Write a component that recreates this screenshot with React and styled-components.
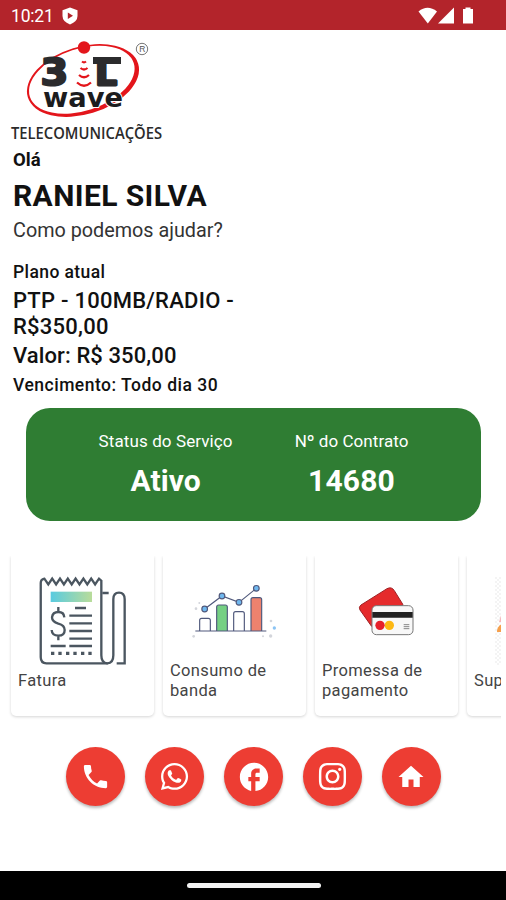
import React from "react";
import styled, { createGlobalStyle } from "styled-components";
import { MdPhone, MdFacebook, MdHome } from "react-icons/md";
import { FaWhatsapp, FaInstagram } from "react-icons/fa";

const GlobalStyle = createGlobalStyle`
  * {
    box-sizing: border-box;
  }

  body {
    margin: 0;
    background-color: #fff;
    font-family: Roboto, "Liberation Sans", sans-serif;
    overflow: hidden;
  }
`;

// Tela inteira do aplicativo
const Screen = styled.div`
  width: 506px;
  height: 900px;
  display: flex;
  flex-direction: column;
  background-color: #fff;
  overflow: hidden;
`;

// Barra de status do Android
const StatusBar = styled.header`
  height: 30px;
  flex-shrink: 0;
  display: flex;
  align-items: center;
  padding: 1px 31px 0 11px;
  background-color: #b3242b;
  color: #fff;
`;

const Clock = styled.span`
  width: 51px;
  font-size: 17.5px;
  letter-spacing: -0.2px;
`;

const StatusIcons = styled.div`
  margin-left: auto;
  display: flex;
`;

const Main = styled.main`
  flex: 1;
  display: flex;
  flex-direction: column;
`;

const LogoBox = styled.div`
  height: 118px;
`;

// Dados do cliente e do plano
const Info = styled.section`
  width: 250px;
  padding-left: 13px;
  color: #111;
`;

const Line = styled.p`
  margin: ${(props) => props.$top || 0}px 0 0;
  font-size: ${(props) => props.$size}px;
  font-weight: ${(props) => props.$weight || 400};
  line-height: ${(props) => props.$height}px;
  letter-spacing: ${(props) => props.$spacing || 0}px;
  color: ${(props) => props.$color || "inherit"};
  white-space: ${(props) => (props.$wrap ? "normal" : "nowrap")};
`;

// Cartão verde com o status do contrato
const ServiceCard = styled.section`
  width: 455px;
  height: 113px;
  margin: 11px 0 0 26px;
  padding-top: 21px;
  display: flex;
  justify-content: center;
  gap: 62px;
  border-radius: 24px;
  background-color: #2f7d33;
  color: #fff;
`;

const ServiceItem = styled.div`
  text-align: center;
`;

// Lista horizontal de atalhos
const Shortcuts = styled.section`
  height: 165px;
  width: 501px;
  margin-top: 35px;
  padding-left: 11px;
  display: flex;
  gap: 9px;
  overflow: hidden;
`;

const Shortcut = styled.article`
  width: 143px;
  height: 160px;
  flex-shrink: 0;
  border-radius: 0 0 5px 5px;
  background-color: #fff;
  box-shadow: 0 1px 3px rgba(0, 0, 0, 0.17);
`;

const Picture = styled.div`
  height: 105px;
  padding: ${(props) => props.$top}px 0 0 ${(props) => props.$left}px;

  svg {
    display: block;
    overflow: visible;
  }
`;

const Label = styled.div`
  height: 40px;
  padding-left: 7px;
  display: flex;
  align-items: center;
  font-size: 16.5px;
  line-height: 20px;
  letter-spacing: 0.35px;
  color: #444;
`;

// Botões redondos de contato
const Contacts = styled.nav`
  margin-top: 26px;
  padding-left: 1px;
  display: flex;
  justify-content: center;
  gap: 19.8px;
`;

const RoundButton = styled.button`
  width: 59px;
  height: 59px;
  padding: 0;
  border: 0;
  border-radius: 50%;
  display: flex;
  align-items: center;
  justify-content: center;
  background-color: #ed3d33;
  color: #fff;
  box-shadow: 0 2px 3px rgba(0, 0, 0, 0.28);
`;

const NavBar = styled.footer`
  height: 29px;
  flex-shrink: 0;
  display: flex;
  justify-content: center;
  padding: 12px 0 0 1px;
  background-color: #000;
`;

const Handle = styled.div`
  width: 134px;
  height: 5px;
  border-radius: 3px;
  background-color: #f2f2f2;
`;

const Logo = () => (
  <svg width="170" height="118" viewBox="0 30 170 118">
    {/* Anel vermelho, mais grosso à direita e embaixo */}
    <mask id="ring" maskUnits="userSpaceOnUse" x="0" y="30" width="170" height="118">
      <rect x="0" y="30" width="170" height="118" fill="#fff" />
      <ellipse cx="81.8" cy="79.8" rx="54.6" ry="31" transform="rotate(-18 81.8 79.8)" fill="#000" />
    </mask>
    <g mask="url(#ring)">
      <ellipse cx="83" cy="80.5" rx="57.7" ry="33.8" transform="rotate(-17 83 80.5)" fill="#e3151b" />
    </g>
    <circle cx="84" cy="47.5" r="6.2" fill="#e3151b" />
    <g fontFamily="DejaVu Sans" fontWeight="bold" fill="#2b2b2d" stroke="#2b2b2d" strokeLinejoin="round">
      <text transform="translate(40.5 85) scale(1.08 1)" fontSize="37" strokeWidth="2.2">3</text>
      <text transform="translate(95.5 84.5) scale(1.08 1)" fontSize="31" strokeWidth="3">L</text>
    </g>
    <rect x="93" y="57" width="28" height="7" fill="#2b2b2d" />
    <g fill="none" stroke="#e3151b" strokeWidth="2.2">
      <path d="M82 61.5q2 1.6 4 0" />
      <path d="M80.5 68q3.5 3 7 0" />
      <path d="M79 75q5 4.5 10 0" />
      <path d="M77 82.5q7 6.5 14 0" />
    </g>
    {/* O contorno branco separa a palavra do anel */}
    <text x="43" y="107" textLength="80" lengthAdjust="spacingAndGlyphs" fontSize="27" fontFamily="DejaVu Sans" fontWeight="bold" fill="#1c1c1e" stroke="#fff" strokeWidth="2" paintOrder="stroke">wave</text>
    <circle cx="142" cy="49" r="5.7" fill="none" stroke="#666" strokeWidth="0.9" />
    <text x="139.3" y="52.2" fontSize="8.5" fontFamily="Liberation Sans" fill="#555">R</text>
    <text x="11" y="139" fontSize="15.5" fontFamily="Open Sans" fontWeight="600" textLength="151" lengthAdjust="spacingAndGlyphs" fill="#2b2b2b">TELECOMUNICAÇÕES</text>
  </svg>
);

const InvoiceIcon = () => (
  <svg width="90" height="90" viewBox="114 92 270 270" fill="none" stroke="#4b5660" strokeWidth="7">
    <defs>
      <linearGradient id="stripe">
        <stop offset="0" stopColor="#59cbe0" />
        <stop offset="1" stopColor="#b9dc9a" />
      </linearGradient>
    </defs>
    <path d="M304 116V330q0 24 18 24t18-24V162q0-20 17-20t17 20v192h-24" />
    <path d="M304 116V106l-7-6-11.7 17-11.7-17-11.7 17-11.7-17-11.7 17-11.7-17-11.7 17-11.7-17-11.7 17-11.7-17-11.7 17-11.7-17-11.7 17-11.7-17q-11 2-11 13v223q0 18 17 18h184M307 143h19" />
    <rect x="152" y="139" width="124" height="31" fill="url(#stripe)" stroke="none" />
    <path d="M225 188h33M208 211h68M208 234h68M208 257h68M208 280h68M152 302h45M208 302h68" />
    <path d="M193 216q-1-16-18-16t-19 16q0 13 19 19 19 5 19 19 0 17-19 17t-20-17M175 185v15M175 271v14" />
    <path d="M153 324h10M175 324h10M198 324h10M220 324h10M243 324h10M265 324h10" strokeWidth="10" />
  </svg>
);

const ChartIcon = () => (
  <svg width="90" height="60" viewBox="105 110 270 180" fill="#fff" stroke="#50597c" strokeWidth="3.5">
    <path d="M134 257v-32q0-6 6-6h20q6 0 6 6v32" />
    <path d="M185 257v-72q0-6 6-6h20q6 0 6 6v72" fill="#75d083" />
    <path d="M236 257v-52q0-6 6-6h20q6 0 6 6v52" />
    <path d="M288 257v-94q0-6 6-6h20q6 0 6 6v94" fill="#ed826e" />
    <path d="M121 257h213M149 191l52-39 51 19 52-42" fill="none" />
    <g fill="#70b8ef">
      <circle cx="149" cy="191" r="8.5" />
      <circle cx="201" cy="152" r="8.5" />
      <circle cx="252" cy="171" r="8.5" />
      <circle cx="304" cy="129" r="8.5" />
    </g>
    <g stroke="none" fill="#d3d5db">
      <circle cx="123" cy="190" r="4" />
      <circle cx="133" cy="173" r="3" />
      <circle cx="116" cy="273" r="4" />
      <circle cx="324" cy="273" r="3" />
      <circle cx="347" cy="272" r="5" />
      <circle cx="348" cy="227" r="4" />
      <circle cx="358" cy="248" r="5" fill="#8bc4f4" />
    </g>
  </svg>
);

const CardsIcon = () => (
  <svg width="56" height="50" viewBox="145 122 168 150">
    <path d="M154 179L232 130q14-7 22 6l26 42-80 72q-9 0-15-8l-34-48q-5-9 3-15z" fill="#e52b2c" stroke="#9f2023" strokeWidth="3" />
    <rect x="187" y="181" width="123" height="87" rx="13" fill="#f8f8f8" stroke="#777" strokeWidth="3" />
    <path d="M188 200h121v17H188z" fill="#222" />
    <circle cx="239" cy="240" r="14" fill="#fdb813" />
    <circle cx="211" cy="240" r="14" fill="#e6202a" />
    <path d="M282 238h17M282 244h17M282 250h17" stroke="#888" strokeWidth="3" />
  </svg>
);

const SupportIcon = () => (
  <svg width="90" height="90" viewBox="0 0 90 90">
    <defs>
      <pattern id="dots" width="4" height="4" patternUnits="userSpaceOnUse">
        <path d="M0 0h2v2H0zM2 2h2v2H2z" fill="#f4f4f4" />
      </pattern>
    </defs>
    <rect width="90" height="88" fill="url(#dots)" />
    <path d="M2 55q0-6 5-8v8z" fill="#f6a04c" />
    <path d="M4 45l3-10v10z" fill="#f6b9bd" />
  </svg>
);

const shortcuts = [
  { label: "Fatura", icon: <InvoiceIcon />, top: 20, left: 27 },
  { label: <>Consumo de<br />banda</>, icon: <ChartIcon />, top: 26, left: 27 },
  { label: <>Promessa de<br />pagamento</>, icon: <CardsIcon />, top: 30, left: 43 },
  { label: "Suporte", icon: <SupportIcon />, top: 21, left: 28 },
];

const contacts = [
  { name: "Telefone", icon: <MdPhone size={31} /> },
  { name: "WhatsApp", icon: <FaWhatsapp size={31} /> },
  { name: "Facebook", icon: <MdFacebook size={34} /> },
  { name: "Instagram", icon: <FaInstagram size={31} /> },
  { name: "Início", icon: <MdHome size={30} /> },
];

const App = () => {
  return (
    <>
      <GlobalStyle />
      <Screen>
        <StatusBar>
          <Clock>10:21</Clock>
          {/* Escudo do Play Protect */}
          <svg width="16" height="18" viewBox="0 0 16 18">
            <path d="M8 .5l7.5 2.7v5.8q0 5.500-7.500 8.500Q.5 14.500.5 9V3.200z" fill="#fff" />
            <path d="M5.800 5.500l5.200 3.300-5.200 3.300z" fill="#b3242b" />
          </svg>
          <StatusIcons>
            {/* Wi-Fi, sinal e bateria */}
            <svg width="57" height="18" viewBox="418 6 57 18" fill="#fff">
              <path d="M418.500 10.500q9-7.500 18.500 0L427.800 22.500z" />
              <path d="M454 6.500v16h-16z" />
              <path d="M463 8h2.500V6.500h5V8H473v14.500h-10z" />
            </svg>
          </StatusIcons>
        </StatusBar>

        <Main>
          <LogoBox>
            <Logo />
          </LogoBox>

          <Info>
            <Line $size={18.5} $weight={700} $height={24}>Olá</Line>
            <Line $top={3} $size={30} $weight={700} $height={42} $spacing={0.4}>RANIEL SILVA</Line>
            <Line $top={1} $size={19.8} $height={26} $color="#333">Como podemos ajudar?</Line>
            <Line $top={16} $size={17.5} $weight={500} $height={24} $spacing={0.4}>Plano atual</Line>
            <Line $top={4} $size={22} $weight={500} $height={26} $spacing={0.25} $wrap>
              PTP - 100MB/RADIO - R$350,00
            </Line>
            <Line $top={3} $size={22} $weight={500} $height={26} $spacing={0.1}>Valor: R$ 350,00</Line>
            <Line $top={4} $size={17.5} $weight={500} $height={24} $spacing={0.5}>Vencimento: Todo dia 30</Line>
          </Info>

          <ServiceCard>
            <ServiceItem>
              <Line $size={17} $height={24} $spacing={0.1}>Status do Serviço</Line>
              <Line $top={8} $size={30} $weight={700} $height={40} $spacing={0.1}>Ativo</Line>
            </ServiceItem>
            <ServiceItem>
              <Line $size={17} $height={24} $spacing={0.05}>Nº do Contrato</Line>
              <Line $top={8} $size={30} $weight={700} $height={40} $spacing={0.2}>14680</Line>
            </ServiceItem>
          </ServiceCard>

          <Shortcuts>
            {shortcuts.map((item, i) => (
              <Shortcut key={i}>
                <Picture $top={item.top} $left={item.left}>{item.icon}</Picture>
                <Label><span>{item.label}</span></Label>
              </Shortcut>
            ))}
          </Shortcuts>

          <Contacts>
            {contacts.map((item) => (
              <RoundButton key={item.name} aria-label={item.name}>
                {item.icon}
              </RoundButton>
            ))}
          </Contacts>
        </Main>

        <NavBar>
          <Handle />
        </NavBar>
      </Screen>
    </>
  );
};

export default App;
